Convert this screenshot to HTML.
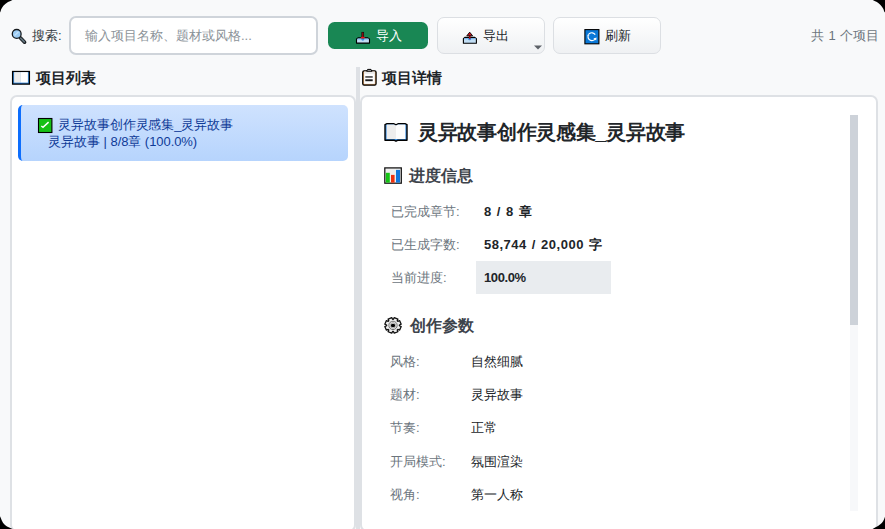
<!DOCTYPE html>
<html><head><meta charset="utf-8">
<style>
html,body{margin:0;padding:0;width:885px;height:529px;overflow:hidden;background:#000;}
*{box-sizing:border-box;}
body{font-family:"Liberation Sans",sans-serif;}
.win{position:absolute;left:0;top:0;width:885px;height:529px;background:#f8f9fa;overflow:hidden;}
.a{position:absolute;white-space:nowrap;line-height:1;}
svg{position:absolute;overflow:visible;}
.btn{position:absolute;top:17px;width:108px;height:37px;border:1px solid #dcdfe3;border-radius:7px;background:linear-gradient(#ffffff,#eff1f3);}
.card{position:absolute;top:95px;height:437px;border:2px solid #dee1e5;border-radius:7px;background:#fff;}
.lbl{color:#6c757d;font-size:13px;}
.val{color:#212529;font-size:13px;}
.vb{color:#212529;font-size:13px;font-weight:bold;letter-spacing:0.5px;word-spacing:1px;}
</style></head><body>
<div class="win">
  <!-- search icon -->
  <svg style="left:8px;top:26px" width="22" height="22" viewBox="0 0 22 22">
    <line x1="12.3" y1="11.8" x2="16.6" y2="16.2" stroke="#1b1f22" stroke-width="3.6" stroke-linecap="round"/>
    <line x1="12.6" y1="12.1" x2="16.3" y2="15.9" stroke="#62757f" stroke-width="1.6" stroke-linecap="round"/>
    <circle cx="8.7" cy="7.9" r="4.4" fill="#9acbf3" stroke="#15191c" stroke-width="1.3"/>
    <path d="M6.5 9.5 L10.5 5.8" stroke="#c6e3fa" stroke-width="1.2"/>
  </svg>
  <div class="a" style="left:32px;top:29px;font-size:13px;color:#343a40">搜索:</div>
  <div style="position:absolute;left:69px;top:16px;width:249px;height:39px;border:2px solid #cfd4da;border-radius:7px;background:#fff"></div>
  <div class="a" style="left:85px;top:29px;font-size:13px;color:#8c9399">输入项目名称、题材或风格...</div>

  <!-- import button -->
  <div style="position:absolute;left:328px;top:22px;width:100px;height:27px;border-radius:6.5px;background:#198754"></div>
  <svg style="left:352px;top:28px" width="22" height="19" viewBox="0 0 22 19">
    <path d="M4.5 11 L6 9.9 L15.8 9.9 L17.5 11 L17.5 15.1 L4.5 15.1 Z" fill="#c2def4" stroke="#000" stroke-width="1.1" stroke-linejoin="round"/>
    <rect x="5.2" y="10.6" width="11.6" height="0.9" fill="#68ace6"/>
    <ellipse cx="10.8" cy="11.6" rx="1.5" ry="1.1" fill="#3d90e0"/>
    <rect x="9.8" y="4.2" width="2" height="5.8" fill="#8a0d12" stroke="#000" stroke-width="0.5"/>
    <ellipse cx="10.8" cy="9.6" rx="2.1" ry="0.9" fill="#e8141c"/>
  </svg>
  <div class="a" style="left:376px;top:29px;font-size:13px;color:#fff">导入</div>

  <!-- export button -->
  <div class="btn" style="left:437px"></div>
  <svg style="left:458px;top:28px" width="22" height="19" viewBox="0 0 22 19">
    <path d="M5.4 10.6 L6.8 9.4 L16.8 9.4 L18.4 10.6 L18.4 15.3 L5.4 15.3 Z" fill="#c2def4" stroke="#000" stroke-width="1.1" stroke-linejoin="round"/>
    <rect x="6.1" y="10.2" width="11.6" height="1" fill="#68ace6"/>
    <ellipse cx="11.7" cy="11.2" rx="1.5" ry="1.1" fill="#3d90e0"/>
    <rect x="10.9" y="7.4" width="1.7" height="3.4" fill="#a80d14"/>
    <path d="M11.7 4.2 L14.6 7.8 L8.8 7.8 Z" fill="#d8101a" stroke="#000" stroke-width="0.9" stroke-linejoin="round"/>
  </svg>
  <div class="a" style="left:483px;top:29px;font-size:13px;color:#212529">导出</div>
  <svg style="left:533px;top:44.8px" width="10" height="6" viewBox="0 0 10 6"><path d="M1 0.5 L9 0.5 L5 4.6 Z" fill="#5c6167"/></svg>

  <!-- refresh button -->
  <div class="btn" style="left:553px"></div>
  <svg style="left:584.4px;top:29px" width="16" height="16" viewBox="0 0 16 16">
    <rect x="0.9" y="0.6" width="14" height="14.2" fill="#0a78d7" stroke="#000" stroke-width="1.1"/>
    <path d="M11.2 5.6 A3.9 3.9 0 1 0 11.4 9.4" fill="none" stroke="#fff" stroke-width="1.2"/>
    <path d="M9.4 9.6 L12.6 8.6 L12.2 11.6 Z" fill="#fff"/>
    <path d="M3.6 6.2 L5.6 5 L5.8 7.4 Z" fill="#0a78d7"/>
    <path d="M3.2 6.6 L5.4 7 L4.4 5.2 Z" fill="#fff"/>
  </svg>
  <div class="a" style="left:605px;top:29px;font-size:13px;color:#212529">刷新</div>

  <div class="a" style="left:811px;top:29px;font-size:13px;color:#6c757d;word-spacing:1px">共 1 个项目</div>

  <!-- section titles -->
  <svg style="left:9px;top:67px" width="24" height="22" viewBox="0 0 24 22">
    <rect x="3.6" y="4.5" width="16.8" height="12.6" fill="#3a8ee0" stroke="#000" stroke-width="1.3"/>
    <rect x="5.1" y="5.1" width="6.8" height="10.5" fill="#ececec"/>
    <rect x="11.9" y="5.1" width="7" height="10.5" fill="#fff"/>
    <rect x="11" y="16" width="2" height="1" fill="#0a3a80"/>
  </svg>
  <div class="a" style="left:36.2px;top:70px;font-size:15px;font-weight:bold;color:#212529">项目列表</div>

  <div style="position:absolute;left:356px;top:67px;width:4px;height:470px;background:#dee1e5"></div>

  <svg style="left:358px;top:66px" width="24" height="24" viewBox="0 0 24 24">
    <rect x="4.7" y="4.8" width="13.4" height="14.4" rx="1.4" fill="#c8935b" stroke="#000" stroke-width="1.2"/>
    <rect x="6.1" y="5.5" width="10.7" height="12.4" fill="#fff"/>
    <rect x="6.3" y="6.4" width="10.3" height="1.1" fill="#dcdcdc"/>
    <path d="M8.6 5.2 L9.6 3.4 L13 3.4 L14 5.2 Z" fill="#d0d0d0" stroke="#000" stroke-width="1" stroke-linejoin="round"/>
    <rect x="7.3" y="10.3" width="7.4" height="1.3" fill="#1a1a1a"/>
    <rect x="7.3" y="13.3" width="7.4" height="1.9" fill="#1a1a1a"/>
  </svg>
  <div class="a" style="left:382.2px;top:70px;font-size:15px;font-weight:bold;color:#212529">项目详情</div>

  <!-- cards -->
  <div class="card" style="left:10px;width:346px"></div>
  <div class="card" style="left:360px;width:518px"></div>

  <!-- list item -->
  <div style="position:absolute;left:18px;top:105px;width:330px;height:56px;border-left:3px solid #0d6efd;border-radius:5px;background:linear-gradient(#cfe2fe,#b6d4fd)"></div>
  <svg style="left:34px;top:114px" width="22" height="22" viewBox="0 0 22 22">
    <rect x="4.5" y="4.5" width="13.4" height="14" fill="#16c016" stroke="#000" stroke-width="1.1"/>
    <path d="M7.3 12 L9 13.3 L14.6 8.1" fill="none" stroke="#fff" stroke-width="1.5"/>
  </svg>
  <div class="a" style="left:58.4px;top:118px;font-size:13px;color:#0f3b98;letter-spacing:-0.13px">灵异故事创作灵感集_灵异故事</div>
  <div class="a" style="left:48.3px;top:135px;font-size:13px;color:#0f3b98;letter-spacing:-0.06px">灵异故事 | 8/8章 (100.0%)</div>

  <!-- right card content -->
  <svg style="left:380px;top:118px" width="32" height="28" viewBox="0 0 32 28">
    <path d="M5 6.6 L6.6 5.8 L14 5.8 L16 6.8 L18 5.8 L25.4 5.8 L27 6.6 L27 22.3 L17.6 22.3 L16 23.2 L14.4 22.3 L5 22.3 Z" fill="#3b8ee0" stroke="#000" stroke-width="1.4" stroke-linejoin="round"/>
    <path d="M6.6 6.6 L14 6.6 L16 7.6 L16 21 L6.6 21 Z" fill="#ededed"/>
    <path d="M16 7.6 L18 6.6 L25.4 6.6 L25.4 21 L16 21 Z" fill="#fdfdfd"/>
  </svg>
  <div class="a" style="left:418px;top:122px;font-size:20px;letter-spacing:-0.3px;font-weight:bold;color:#212529">灵异故事创作灵感集_灵异故事</div>

  <svg style="left:381px;top:164px" width="24" height="24" viewBox="0 0 24 24">
    <rect x="3.8" y="3.9" width="16.5" height="15.3" fill="#efefef" stroke="#111" stroke-width="1.25"/>
    <rect x="4.8" y="8.8" width="4" height="9.8" fill="#14c414"/>
    <rect x="10" y="10.9" width="3.6" height="7.7" fill="#f0320f"/>
    <rect x="15" y="5.9" width="4" height="12.7" fill="#1277dd"/>
  </svg>
  <div class="a" style="left:408.9px;top:167.6px;font-size:16px;font-weight:bold;color:#3d434b">进度信息</div>

  <div class="a lbl" style="left:391px;top:205px">已完成章节:</div>
  <div class="a vb" style="left:484px;top:205px">8 / 8 章</div>
  <div class="a lbl" style="left:391px;top:238px">已生成字数:</div>
  <div class="a vb" style="left:484px;top:238px">58,744 / 20,000 字</div>
  <div style="position:absolute;left:476px;top:261px;width:135px;height:33px;background:#e9ecef"></div>
  <div class="a lbl" style="left:391px;top:271px">当前进度:</div>
  <div class="a vb" style="left:484px;top:271px;letter-spacing:-0.4px">100.0%</div>

  <svg style="left:381px;top:313px" width="24" height="24" viewBox="0 0 24 24">
    <path id="gear" d="M12.40 6.33 L13.26 4.61 L16.91 6.04 L16.23 7.84 L16.80 8.38 L18.69 7.74 L20.20 11.20 L18.39 12.02 L18.39 12.78 L20.20 13.60 L18.69 17.06 L16.80 16.42 L16.23 16.96 L16.91 18.76 L13.26 20.19 L12.40 18.47 L11.60 18.47 L10.74 20.19 L7.09 18.76 L7.77 16.96 L7.20 16.42 L5.31 17.06 L3.80 13.60 L5.61 12.78 L5.61 12.02 L3.80 11.20 L5.31 7.74 L7.20 8.38 L7.77 7.84 L7.09 6.04 L10.74 4.61 L11.60 6.33 Z" fill="#eeeeee" stroke="#111" stroke-width="1.3" stroke-linejoin="round"/>
    <circle cx="12" cy="12.4" r="4.2" fill="#e2e2e2" stroke="#777" stroke-width="1"/>
    <circle cx="12" cy="12.4" r="2.7" fill="#c4c4c4" stroke="#999" stroke-width="0.6"/>
    <rect x="10" y="11" width="4" height="2.9" rx="1.2" fill="#000"/>
  </svg>
  <div class="a" style="left:409.8px;top:317.6px;font-size:16px;font-weight:bold;color:#3d434b">创作参数</div>

  <div class="a lbl" style="left:390px;top:355px">风格:</div>
  <div class="a val" style="left:470.8px;top:355px">自然细腻</div>
  <div class="a lbl" style="left:390px;top:388px">题材:</div>
  <div class="a val" style="left:470.8px;top:388px">灵异故事</div>
  <div class="a lbl" style="left:390px;top:421px">节奏:</div>
  <div class="a val" style="left:470.8px;top:421px">正常</div>
  <div class="a lbl" style="left:390px;top:455px">开局模式:</div>
  <div class="a val" style="left:470.8px;top:455px">氛围渲染</div>
  <div class="a lbl" style="left:390px;top:488px">视角:</div>
  <div class="a val" style="left:470.8px;top:488px">第一人称</div>

  <!-- scrollbar -->
  <div style="position:absolute;left:850px;top:115px;width:8px;height:396px;background:#f7f8fa"></div>
  <div style="position:absolute;left:850px;top:115px;width:8px;height:210px;background:#cdd2d9"></div>
  <!-- window corners -->
  <svg style="left:0;top:0" width="885" height="529" viewBox="0 0 885 529">
    <path d="M0 0 L12.4 0 L10.5 0.9 L8 2.1 L5.6 3.7 L3.6 5.5 L2.2 7.4 L1.2 9.3 L0.5 11.6 L0 12.4 Z" fill="#000"/>
    <path d="M885 0 L872.8 0 L874.6 1 L876.9 2.1 L878.9 3.6 L880.5 5.1 L882.1 7 L883.4 9 L884.2 11.4 L885 12.4 Z" fill="#000"/>
    <path d="M0 529 L0 516.2 L0.9 518.3 L1.8 520.6 L3.1 522.9 L5 525 L7 526.5 L9.2 527.6 L11.4 528.5 L12.6 529 Z" fill="#000"/>
    <path d="M885 529 L885 516.8 L884.1 519.2 L883.1 521.2 L881.8 522.9 L880 524.6 L878 526 L875.6 527.3 L873.4 528.5 L872.6 529 Z" fill="#000"/>
  </svg>
</div>
</body></html>
